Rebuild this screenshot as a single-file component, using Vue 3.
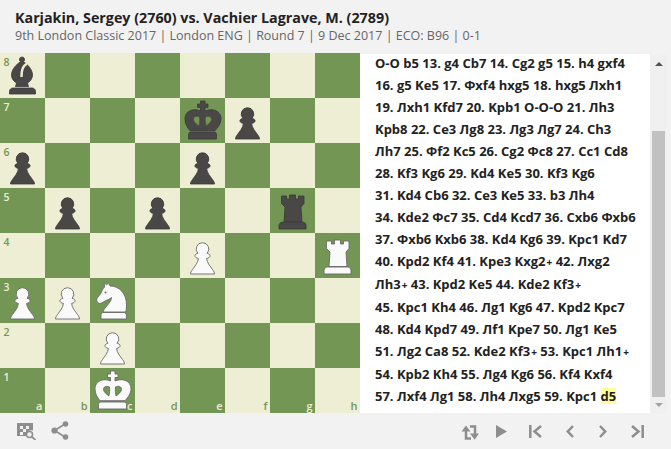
<template>
  <div class="page">
    <header class="head">
      <h1 class="players">Karjakin, Sergey (2760) vs. Vachier Lagrave, M. (2789)</h1>
      <p class="event">9th London Classic 2017 | London ENG | Round 7 | 9 Dec 2017 | ECO: B96 | 0-1</p>
    </header>

    <main class="body">
      <div class="board">
        <div
          v-for="sq in squares"
          :key="sq.id"
          class="square"
          :class="sq.dark ? 'dark' : 'light'"
        >
          <span v-if="sq.rank" class="rank">{{ sq.rank }}</span>
          <span v-if="sq.file" class="file">{{ sq.file }}</span>
          <svg v-if="sq.piece" class="piece" viewBox="0 0 45 45">
            <g :class="sq.piece[0] === 'w' ? 'white' : 'black'">
              <path v-for="(d, i) in shapes[sq.piece[1]]" :key="i" :d="d" />
            </g>
            <g v-if="sq.piece[1] === 'k'" class="holes">
              <path d="M19.5 19c-3-1.5-6-.5-6 2.500 0 2.500 3.500 5 5.500 6.500 .5-3 1-6 .5-9z" />
              <path d="M25.500 19c3-1.500 6-.5 6 2.500 0 2.500-3.500 5-5.500 6.500-.5-3-1-6-.5-9z" />
            </g>
            <path v-if="sq.piece[1] === 'b'" class="slit" d="M27 10.500C23 13 21.500 16 21.500 24" />
            <circle v-if="sq.piece[1] === 'n'" class="eye" cx="15.500" cy="14.500" r="1" />
          </svg>
        </div>
      </div>

      <section class="moves">
        <div class="moves-text">
          <div v-for="(line, i) in lines" :key="i" class="line">
            <template v-for="(seg, j) in line" :key="j">
              <span v-if="seg === '+'" class="check">+</span>
              <template v-else>{{ seg }}</template>
            </template>
            <span v-if="i === lines.length - 1" class="current">d5</span>
          </div>
        </div>
        <div class="scrollbar">
          <span class="arrow up"></span>
          <div class="thumb"></div>
          <span class="arrow down"></span>
        </div>
      </section>
    </main>

    <footer class="toolbar">
      <div class="tools">
        <svg width="19" height="17" viewBox="0 0 19 17">
          <path fill="#8e8e8e" d="M0 0h16v7.500a5.500 5.500 0 0 0-7 5.500H0z" />
          <path fill="#f2f2f2" d="M3 3h3v3H3zM9 3h3v3H9zM6 6h3v3H6zM3 9h3v3H3z" />
          <circle cx="12.500" cy="11.500" r="3" fill="none" stroke="#8e8e8e" stroke-width="1.500" />
          <path stroke="#8e8e8e" stroke-width="1.700" d="M14.500 13.500l4 3.500" />
        </svg>
        <svg width="18" height="19" viewBox="0 0 18 19">
          <path stroke="#8e8e8e" stroke-width="1.600" fill="none" d="M14 3 3.500 9.500 14 16" />
          <circle cx="14.500" cy="3" r="2.800" fill="#8e8e8e" />
          <circle cx="3.500" cy="9.500" r="3.100" fill="#8e8e8e" />
          <circle cx="14.500" cy="16" r="2.800" fill="#8e8e8e" />
        </svg>
      </div>
      <div class="controls">
        <svg class="flip" width="18" height="15" viewBox="0 0 18 15">
          <path fill="none" stroke="#8e8e8e" stroke-width="2.500" d="M5 4v9.500h5M14 11V1.500H9" />
          <path fill="#8e8e8e" d="M.5 6.500 5 .5l4.500 6zM9 8.500 13.700 14.700 18 8.500z" />
        </svg>
        <svg class="play" width="11" height="13" viewBox="0 0 11 13">
          <path fill="#8e8e8e" d="M0 0l11 6.500L0 13z" />
        </svg>
        <svg class="first" width="13" height="13" viewBox="0 0 13 13">
          <path fill="none" stroke="#8e8e8e" stroke-width="2.500" d="M1.300 0v13M12 1 5.500 6.500 12 12" />
        </svg>
        <svg class="prev" width="8" height="13" viewBox="0 0 8 13">
          <path fill="none" stroke="#8e8e8e" stroke-width="2.500" d="M7 1 1.800 6.500 7 12" />
        </svg>
        <svg class="next" width="8" height="13" viewBox="0 0 8 13">
          <path fill="none" stroke="#8e8e8e" stroke-width="2.500" d="M1 1l5.200 5.500L1 12" />
        </svg>
        <svg class="last" width="13" height="13" viewBox="0 0 13 13">
          <path fill="none" stroke="#8e8e8e" stroke-width="2.500" d="M11.700 0v13M1 1l6.500 5.500L1 12" />
        </svg>
      </div>
    </footer>
  </div>
</template>

<script setup>
const files = ['a', 'b', 'c', 'd', 'e', 'f', 'g', 'h']

const position = {
  a8: 'bb', e7: 'bk', f7: 'bp', a6: 'bp', e6: 'bp', b5: 'bp', d5: 'bp', g5: 'br',
  e4: 'wp', h4: 'wr', a3: 'wp', b3: 'wp', c3: 'wn', c2: 'wp', c1: 'wk',
}

const squares = []
for (let r = 8; r >= 1; r--) {
  files.forEach((f, i) => {
    squares.push({
      id: f + r,
      dark: (i + r) % 2 === 1,
      rank: i === 0 ? r : null,
      file: r === 1 ? f : null,
      piece: position[f + r],
    })
  })
}

const shapes = {
  p: ['M22.500 9.700a6.300 6.300 0 0 1 4.600 10.600c1.800.5 3 1.300 3 2.500 0 1.300-1.400 2.200-3.500 2.700.5 4.500 3.500 7.500 5.900 11 1.300 1.800 2 3 2 4.500H10.500c0-1.500.7-2.700 2-4.500 2.400-3.500 5.400-6.500 5.900-11-2.100-.5-3.500-1.400-3.500-2.700 0-1.200 1.200-2 3-2.500a6.300 6.300 0 0 1 4.600-10.600z'],
  r: ['M11.500 8h5v3h3V7h6v4h3V8h5.500v7.500L31 19l1 14.500H14L15 19l-3.500-3.500z', 'M12.500 34h20c1.500 0 3 1 3.500 3v4H9v-4c.5-2 2-3 3.500-3z'],
  n: ['M18.500 5l1.500 3c9 0 16.500 7 16.500 19 0 3-.3 5-.8 7H13c.5-2.500 3-5 5-7.500 2-2.500 3.500-4.500 3.500-7-1.500 1.500-3.500 2-5 2.800l-3 1.500c-2 1.500-3.500 2-5 1.200-1.500-1-2.500-2.500-1.500-4.500 1-2 3-3.500 4.500-6.500.8-2 1.500-3.500 3-4.800l-.3-4.400 2.300 2z', 'M13 34.500h21c1 0 2 1 2.500 2.500v4H11v-4c0-1 1-2.500 2-2.500z'],
  b: ['M22 4a2.600 2.600 0 0 1 1.500 4.700c4.500 3 8.500 7.500 9 12.500.3 4-2 7-5 8.800l1 3.500H15.500l1-3.500c-3-1.800-5.300-4.800-5-8.800.5-5 4.500-9.500 9-12.500A2.600 2.600 0 0 1 22 4z', 'M13 35h19c2 0 3.500 1.500 3.500 3.500V41h-26v-2.500C9.500 36.500 11 35 13 35z'],
  k: ['M20.500 3H25v3h3v3.500h-3V13c2-.8 4-1.300 6-1.300 6 0 10 3.800 10 9 0 5-3 8.500-6 12H10c-3-3.500-5-7-5-12 0-5.200 4-9 10-9 2 0 3.500.5 5.500 1.300V9.500h-3V6h3z', 'M11 34h23c1.500 0 2.500 1 2.500 2.500V41h-28v-4.500C8.500 35 9.500 34 11 34z'],
}

const lines = [
  'O-O b5 13. g4 Cb7 14. Cg2 g5 15. h4 gxf4',
  '16. g5 Ke5 17. Фxf4 hxg5 18. hxg5 Лxh1',
  '19. Лxh1 Kfd7 20. Kpb1 O-O-O 21. Лh3',
  'Kpb8 22. Ce3 Лg8 23. Лg3 Лg7 24. Ch3',
  'Лh7 25. Фf2 Kc5 26. Cg2 Фc8 27. Cc1 Cd8',
  '28. Kf3 Kg6 29. Kd4 Ke5 30. Kf3 Kg6',
  '31. Kd4 Cb6 32. Ce3 Ke5 33. b3 Лh4',
  '34. Kde2 Фc7 35. Cd4 Kcd7 36. Cxb6 Фxb6',
  '37. Фxb6 Kxb6 38. Kd4 Kg6 39. Kpc1 Kd7',
  '40. Kpd2 Kf4 41. Kpe3 Kxg2+ 42. Лxg2',
  'Лh3+ 43. Kpd2 Ke5 44. Kde2 Kf3+',
  '45. Kpc1 Kh4 46. Лg1 Kg6 47. Kpd2 Kpc7',
  '48. Kd4 Kpd7 49. Лf1 Kpe7 50. Лg1 Ke5',
  '51. Лg2 Ca8 52. Kde2 Kf3+ 53. Kpc1 Лh1+',
  '54. Kpb2 Kh4 55. Лg4 Kg6 56. Kf4 Kxf4',
  '57. Лxf4 Лg1 58. Лh4 Лxg5 59. Kpc1 ',
].map((l) => l.split(/(\+)/))
</script>

<style>
html, body {
  margin: 0;
  background: #f2f2f2;
}
</style>

<style scoped>
.page {
  width: 671px;
  height: 449px;
  overflow: hidden;
  background: #f2f2f2;
  font-family: "Open Sans", sans-serif;
}
.head {
  height: 53px;
  padding: 9px 0 0 15px;
  box-sizing: border-box;
}
.players {
  margin: 0;
  font-size: 14.300px;
  line-height: 18px;
  font-weight: 700;
  color: #222;
}
.event {
  margin: 0;
  font-size: 12.500px;
  line-height: 17px;
  color: #666;
}
.body {
  display: flex;
  height: 360px;
}
.board {
  display: grid;
  grid-template-columns: repeat(8, 45px);
  grid-template-rows: repeat(8, 45px);
  flex: none;
}
.square {
  position: relative;
}
.light {
  background: #eeeed5;
  color: #749654;
}
.dark {
  background: #749654;
  color: #eeeed5;
}
.rank {
  position: absolute;
  left: 3.500px;
  top: 3px;
  font-size: 10.500px;
  line-height: 12px;
  font-weight: 600;
}
.file {
  position: absolute;
  right: 2.500px;
  bottom: 1px;
  font-size: 11px;
  line-height: 12px;
  font-weight: 600;
}
.piece {
  position: absolute;
  inset: 0;
  width: 45px;
  height: 45px;
}
.black path {
  fill: #4a4847;
  stroke: #3a3938;
  stroke-width: 0.8;
}
.white path {
  fill: #fafafa;
  stroke: #6a6a6a;
  stroke-width: 0.9;
}
.holes path {
  fill: #749654;
  stroke: #444;
  stroke-width: 0.6;
}
.slit {
  fill: none;
  stroke: #eeeed5;
  stroke-width: 2.400;
}
.eye {
  fill: #6a6a6a;
}
.moves {
  flex: none;
  display: flex;
  height: 359px;
  margin-top: 1px;
}
.moves-text {
  flex: none;
  width: 290px;
  box-sizing: border-box;
  padding: 0 0 0 15px;
  background: #fff;
  font-size: 13px;
  font-weight: 700;
  line-height: 22px;
  color: #222;
  white-space: pre;
  overflow: hidden;
}
.line:first-child {
  margin-top: -2px;
}
.check {
  font-size: 10px;
  margin-left: 1px;
}
.current {
  display: inline-block;
  line-height: 16px;
  background: #ffff99;
}
.scrollbar {
  flex: none;
  width: 17px;
  background: #f0f0f0;
  display: flex;
  flex-direction: column;
  align-items: center;
}
.arrow {
  flex: none;
  width: 0;
  height: 0;
  border-left: 4px solid transparent;
  border-right: 4px solid transparent;
}
.up {
  margin: 8px 0 65px;
  border-bottom: 4px solid #505050;
}
.down {
  margin-top: 6px;
  border-top: 4px solid #a3a3a3;
}
.thumb {
  flex: none;
  width: 13px;
  height: 266px;
  background: #c1c1c1;
}
.toolbar {
  height: 36px;
  box-sizing: border-box;
  padding: 10px 27px 0 17px;
  display: flex;
  justify-content: space-between;
  align-items: flex-start;
}
.tools {
  display: flex;
  align-items: center;
  gap: 15px;
}
.tools svg:last-child {
  margin-top: -2px;
}
.controls {
  display: flex;
  align-items: flex-start;
  padding-top: 2px;
}
.play {
  margin-left: 17px;
}
.first {
  margin-left: 22px;
}
.prev {
  margin-left: 24px;
}
.next {
  margin-left: 25px;
}
.last {
  margin-left: 24px;
}
</style>
